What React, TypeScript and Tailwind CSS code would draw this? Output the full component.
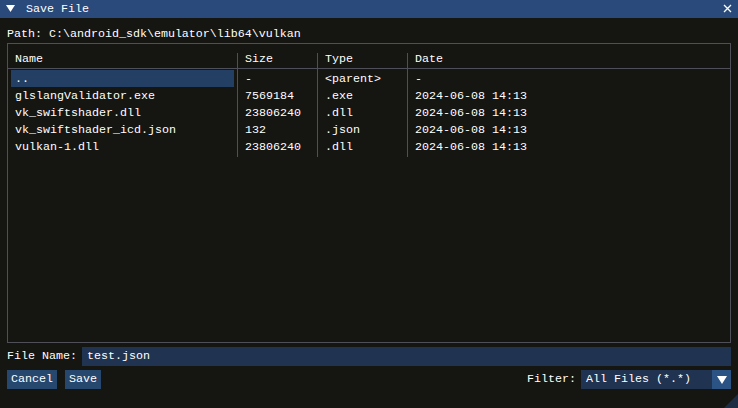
import React from "react";

type Entry = { name: string; size: string; type: string; date: string };

const ENTRIES: Entry[] = [
  { name: "..", size: "-", type: "<parent>", date: "-" },
  { name: "glslangValidator.exe", size: "7569184", type: ".exe", date: "2024-06-08 14:13" },
  { name: "vk_swiftshader.dll", size: "23806240", type: ".dll", date: "2024-06-08 14:13" },
  { name: "vk_swiftshader_icd.json", size: "132", type: ".json", date: "2024-06-08 14:13" },
  { name: "vulkan-1.dll", size: "23806240", type: ".dll", date: "2024-06-08 14:13" },
];

function Column({
  title,
  field,
  className,
  first,
}: {
  title: string;
  field: keyof Entry;
  className: string;
  first?: boolean;
}) {
  return (
    <div className={`flex flex-col pb-[2px] ${first ? "" : "border-l border-[#4f4f59]"} ${className}`}>
      <div className="h-[16px] border-b border-[#4f4f59] pl-[7px] leading-[12px]">{title}</div>
      <div className="pt-[1px]">
        {ENTRIES.map((e, i) => (
          <div key={i} className="h-[17px] leading-[17px]">
            {first && i === 0 ? (
              <div className="ml-[3px] mr-[3px] h-[17px] bg-[#234064] pl-[4px]">
                <span className="relative top-[1px]">{e[field]}</span>
              </div>
            ) : (
              <div className="whitespace-pre pl-[7px]">
                <span className="relative top-[1px]">{e[field]}</span>
              </div>
            )}
          </div>
        ))}
      </div>
    </div>
  );
}

export default function App() {
  return (
    <div
      className="relative flex h-[408px] w-[738px] flex-col overflow-hidden bg-[#151511] text-[11.67px] text-white"
      style={{ fontFamily: '"Liberation Mono", "DejaVu Sans Mono", monospace' }}
    >
      {/* title bar */}
      <div className="flex h-[18px] shrink-0 items-center bg-[#294a7a] pl-[6px] pr-[6px]">
        <svg width="9" height="7" viewBox="0 0 9 7" className="mt-[-1px]">
          <polygon points="0,0 9,0 4.5,7" fill="#fff" />
        </svg>
        <span className="ml-[11px] leading-[18px]">Save File</span>
        <svg width="9" height="9" viewBox="0 0 9 9" className="ml-auto mt-[-1px]">
          <path d="M1 1 L8 8 M8 1 L1 8" stroke="#fff" strokeWidth="1.3" />
        </svg>
      </div>

      <div className="flex flex-1 flex-col px-[7px]">
        <div className="mt-[8px] h-[14px] whitespace-pre leading-[16px]">
          Path: C:\android_sdk\emulator\lib64\vulkan
        </div>

        {/* file table */}
        <div className="mt-[3px] h-[300px] border border-[#4f4f59] pt-[9px]">
          <div className="flex">
            <Column title="Name" field="name" className="w-[229px]" first />
            <Column title="Size" field="size" className="w-[80px]" />
            <Column title="Type" field="type" className="w-[90px]" />
            <Column title="Date" field="date" className="flex-1" />
          </div>
        </div>

        {/* file name */}
        <div className="mt-[4px] flex h-[19px] items-center">
          <span className="w-[75px] whitespace-pre">File Name:</span>
          <div className="flex h-[19px] flex-1 items-center bg-[#203350] pl-[5px]">test.json</div>
        </div>

        {/* actions */}
        <div className="mt-[4px] flex h-[19px] items-center">
          <button className="h-[19px] w-[50px] bg-[#27486e] leading-[19px]">Cancel</button>
          <button className="ml-[8px] h-[19px] w-[36px] bg-[#27486e] leading-[19px]">Save</button>
          <span className="ml-auto w-[54px] whitespace-pre">Filter:</span>
          <div className="flex h-[19px] w-[150px] items-center bg-[#203350]">
            <span className="flex-1 whitespace-pre pl-[5px]">All Files (*.*)</span>
            <div className="flex h-[19px] w-[19px] items-center justify-center bg-[#2b5485]">
              <svg width="10" height="8" viewBox="0 0 10 8">
                <polygon points="0,0 10,0 5,8" fill="#fff" />
              </svg>
            </div>
          </div>
        </div>
      </div>

      {/* resize grip */}
      <svg width="14" height="14" viewBox="0 0 14 14" className="absolute bottom-0 right-0">
        <polygon points="14,0 14,14 0,14" fill="#1d2e44" />
      </svg>
    </div>
  );
}
